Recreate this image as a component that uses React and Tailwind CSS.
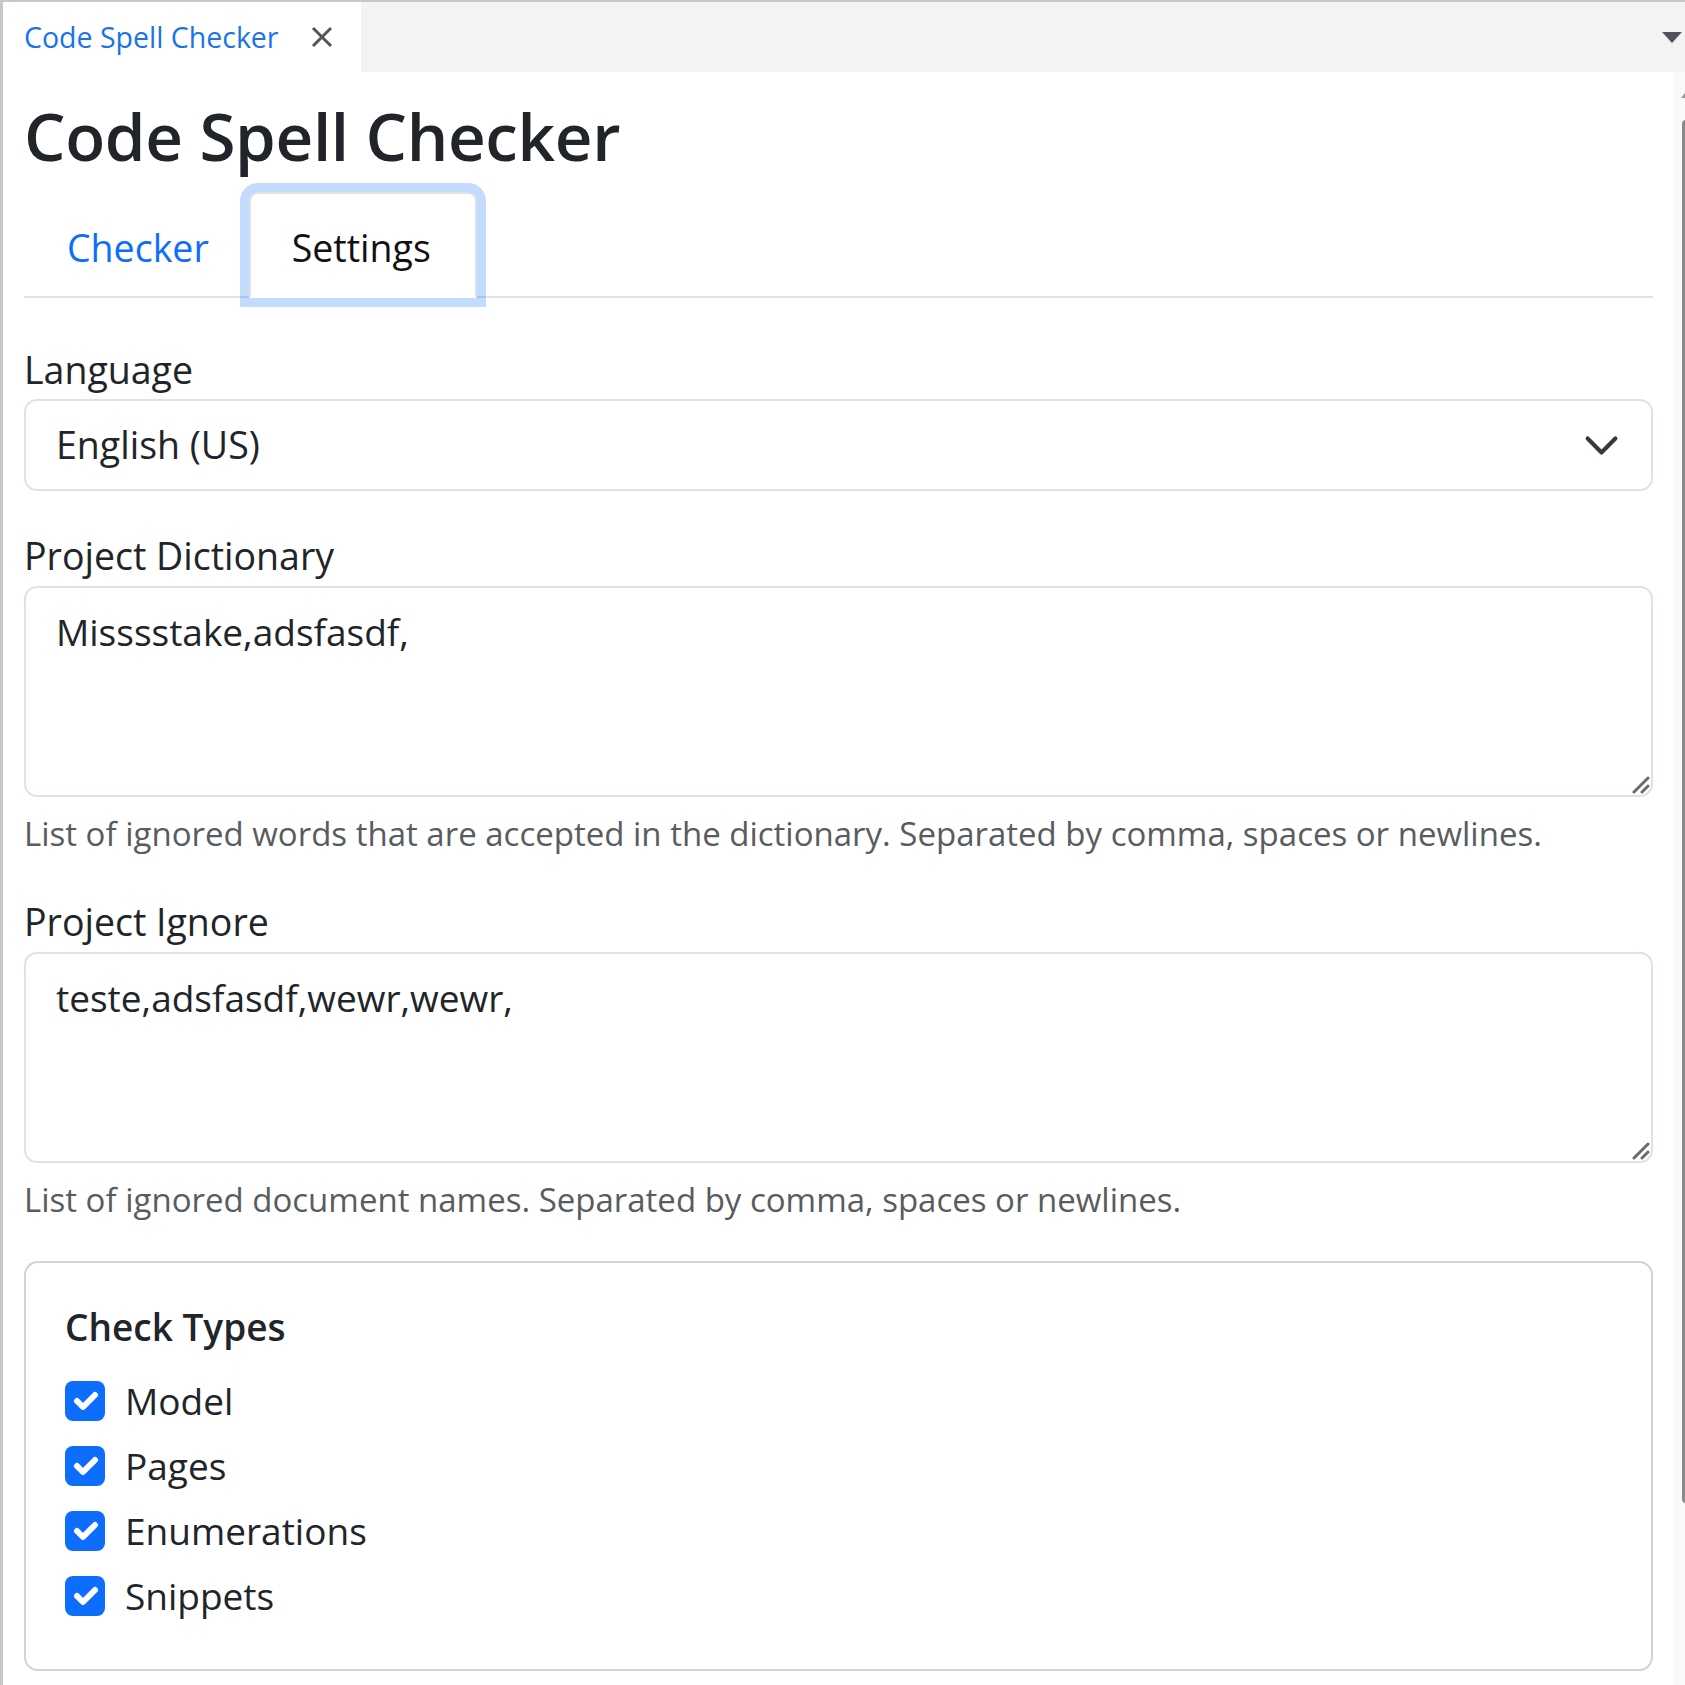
import React from "react";

const checkTypes = ["Model", "Pages", "Enumerations", "Snippets"];

function ResizeHandle() {
  return (
    <svg
      className="absolute right-[3px] bottom-[3px]"
      width="20"
      height="20"
      viewBox="0 0 20 20"
    >
      <path d="M4 18 L18 4 M12 18 L18 12" stroke="#6b6b6b" strokeWidth="3" strokeLinecap="round" />
    </svg>
  );
}

function CheckBox() {
  return (
    <span className="w-[40px] h-[40px] rounded-[8px] bg-[#0d6efd] flex items-center justify-center shrink-0">
      <svg width="40" height="40" viewBox="0 0 20 20">
        <path
          d="m6 10 3 3 6-6"
          fill="none"
          stroke="#fff"
          strokeWidth="3"
          strokeLinecap="round"
          strokeLinejoin="round"
        />
      </svg>
    </span>
  );
}

function TextBox({ value }) {
  return (
    <div className="relative mt-[2px]">
      <textarea
        readOnly
        defaultValue={value}
        className="block w-full h-[211px] resize-none border-2 border-[#dee2e6] rounded-[13px] pt-[16px] pl-[30px] pr-[30px] text-[37px] leading-[56px] text-[#212529] bg-white outline-none"
      />
      <ResizeHandle />
    </div>
  );
}

export default function App() {
  return (
    <div className="w-[1685px] h-[1685px] bg-white border-t-2 border-l-[3px] border-[#c6c6cc] flex flex-col overflow-hidden font-['Open_Sans','Noto_Sans',sans-serif]">
      {/* editor tab strip */}
      <div className="h-[70px] shrink-0 bg-[#f3f3f3] flex items-center">
        <div className="h-full w-[358px] bg-white flex items-center pl-[21px]">
          <span className="text-[28.5px] leading-[40px] text-[#1a73e8] whitespace-nowrap">
            Code Spell Checker
          </span>
          <svg className="ml-[32px]" width="22" height="22" viewBox="0 0 22 22">
            <path d="M2 2 L20 20 M20 2 L2 20" stroke="#555" strokeWidth="3" />
          </svg>
        </div>
        <div className="flex-1" />
        <svg className="mr-[3px]" width="20" height="11" viewBox="0 0 20 11">
          <polygon points="0,0 20,0 10,11" fill="#4f535c" />
        </svg>
      </div>

      <div className="flex flex-1 min-h-0">
        <main className="flex-1 pl-[21px] pr-[20px] flex flex-col text-[#212529]">
          <h1 className="mt-[25px] text-[65.5px] leading-[78px] font-semibold tracking-[-0.005em] whitespace-nowrap">
            Code Spell Checker
          </h1>

          <nav className="mt-[17px] flex border-b-2 border-[#dee2e6] text-[37.5px] leading-[56px]">
            <div className="h-[106px] -mb-[2px] pt-[6px] pl-[41px] pr-[38px] border-2 border-transparent flex items-center text-[#0d6efd]">
              Checker
            </div>
            <div className="h-[106px] -mb-[2px] pt-[6px] pl-[41px] pr-[44px] border-2 border-[#dee2e6] border-b-white bg-white rounded-t-[9px] flex items-center text-[#111] shadow-[0_0_0_9px_rgba(13,110,253,0.25)]">
              Settings
            </div>
          </nav>

          <label className="mt-[44px] text-[37.5px] leading-[56px]">Language</label>
          <div className="mt-[1px] h-[92px] border-2 border-[#dee2e6] rounded-[13px] flex items-center justify-between pl-[30px] pr-[31px]">
            <span className="text-[37.5px] leading-[56px]">English (US)</span>
            <svg width="37" height="37" viewBox="0 0 16 16">
              <path
                d="m2 5 6 6 6-6"
                fill="none"
                stroke="#343a40"
                strokeWidth="1.8"
                strokeLinecap="round"
                strokeLinejoin="round"
              />
            </svg>
          </div>

          <label className="mt-[37px] text-[37.5px] leading-[56px]">Project Dictionary</label>
          <TextBox value="Misssstake,adsfasdf," />
          <p className="mt-[12px] text-[33px] leading-[50px] text-[#595c5f] whitespace-nowrap">
            List of ignored words that are accepted in the dictionary. Separated by comma, spaces or newlines.
          </p>

          <label className="mt-[35px] text-[37.5px] leading-[56px]">Project Ignore</label>
          <TextBox value="teste,adsfasdf,wewr,wewr," />
          <p className="mt-[12px] text-[33px] leading-[50px] text-[#595c5f] whitespace-nowrap">
            List of ignored document names. Separated by comma, spaces or newlines.
          </p>

          <section className="mt-[36px] border-2 border-[#d2d2d2] rounded-[14px] pt-[39px] pb-[41px] pl-[39px]">
            <h5 className="text-[37px] leading-[50px] font-semibold">Check Types</h5>
            <div className="mt-[16px] flex flex-col">
              {checkTypes.map((t) => (
                <div key={t} className="h-[65px] flex items-center gap-[20px]">
                  <CheckBox />
                  <span className="text-[37px] leading-[56px]">{t}</span>
                </div>
              ))}
            </div>
          </section>
        </main>

        {/* page scrollbar, mostly cut off at the right edge */}
        <div className="w-[12px] shrink-0 bg-[#f9f9f9] overflow-hidden flex flex-col pt-[21px]">
          <svg className="ml-[8px]" width="8" height="5" viewBox="0 0 8 5">
            <polygon points="4,0 8,5 0,5" fill="#9a9a9a" />
          </svg>
          <div className="mt-[22px] ml-[9px] w-[8px] h-[1383px] rounded-[4px] bg-[#8a8a8a] shrink-0" />
        </div>
      </div>
    </div>
  );
}
